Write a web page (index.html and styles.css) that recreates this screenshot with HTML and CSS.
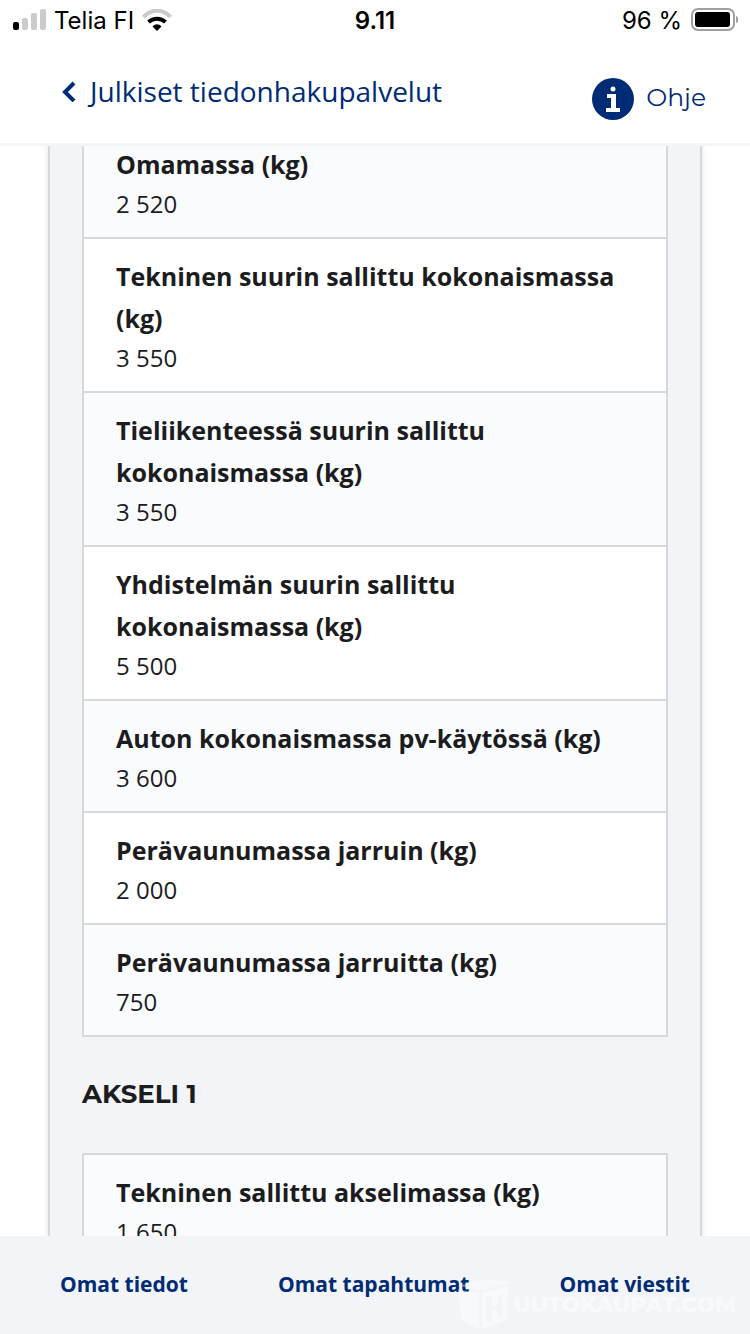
FILE: index.html
```html
<!DOCTYPE html>
<html lang="fi">
<head>
<meta charset="utf-8">
<meta name="viewport" content="width=device-width, initial-scale=1">
<title>Julkiset tiedonhakupalvelut</title>
<link rel="stylesheet" href="styles.css">
</head>
<body>
<div class="status">
  <div class="carrier">
    <svg width="34" height="22" viewBox="0 0 34 22" aria-hidden="true">
      <rect x="1" y="13" width="6" height="8" rx="2" fill="#000"/>
      <rect x="10" y="9" width="6" height="12" rx="2" fill="#cbcbcb"/>
      <rect x="19" y="4" width="6" height="17" rx="2" fill="#cbcbcb"/>
      <rect x="28" y="0" width="6" height="21" rx="2" fill="#cbcbcb"/>
    </svg>
    <span>Telia FI</span>
    <svg width="30" height="22" viewBox="0 0 30 22" aria-hidden="true">
      <path d="M1.500 8C9-.5 21-.5 28.500 8" fill="none" stroke="#cbcbcb" stroke-width="4"/>
      <path d="M6.500 13C11.500 8.500 18.500 8.500 23.500 13" fill="none" stroke="#000" stroke-width="4"/>
      <path d="M10.500 17.500c3-3 6-3 9 0L15 22z" fill="#000"/>
    </svg>
  </div>
  <time class="clock">9.11</time>
  <div class="battery">
    <span>96 %</span>
    <svg width="48" height="24" viewBox="0 0 48 24" aria-hidden="true">
      <rect x="2" y="1" width="42" height="21" rx="6" fill="none" stroke="#a0a0a0" stroke-width="2"/>
      <rect x="5" y="4" width="35" height="15" rx="3" fill="#000"/>
      <path d="M46 8c3 1 3 6 0 7z" fill="#a0a0a0"/>
    </svg>
  </div>
</div>
<header class="header">
  <a class="back" href="#">
    <svg width="14" height="22" viewBox="0 0 14 22" aria-hidden="true"><path d="M12 3 3 12l9 9" fill="none" stroke="currentColor" stroke-width="4"/></svg>
    <span>Julkiset tiedonhakupalvelut</span>
  </a>
  <a class="help" href="#">
    <svg width="42" height="42" viewBox="0 0 42 42" aria-hidden="true">
      <circle cx="21" cy="21" r="21" fill="currentColor"/>
      <circle cx="21" cy="11" r="2.500" fill="#fff"/>
      <path d="M15 16h9v14h4v4H14v-4h5v-10h-4z" fill="#fff"/>
    </svg>
    <span>Ohje</span>
  </a>
</header>
<main class="content">
  <div class="panel">
    <dl class="list list-continued">
      <div class="row"><dt>Omamassa (kg)</dt><dd>2 520</dd></div>
      <div class="row"><dt>Tekninen suurin sallittu kokonaismassa (kg)</dt><dd>3 550</dd></div>
      <div class="row"><dt>Tieliikenteessä suurin sallittu kokonaismassa (kg)</dt><dd>3 550</dd></div>
      <div class="row"><dt>Yhdistelmän suurin sallittu kokonaismassa (kg)</dt><dd>5 500</dd></div>
      <div class="row"><dt>Auton kokonaismassa pv-käytössä (kg)</dt><dd>3 600</dd></div>
      <div class="row"><dt>Perävaunumassa jarruin (kg)</dt><dd>2 000</dd></div>
      <div class="row"><dt>Perävaunumassa jarruitta (kg)</dt><dd>750</dd></div>
    </dl>
    <h2 class="title">AKSELI 1</h2>
    <dl class="list">
      <div class="row"><dt>Tekninen sallittu akselimassa (kg)</dt><dd>1 650</dd></div>
    </dl>
  </div>
</main>
<footer class="footer">
  <nav class="tabs">
    <a href="#">Omat tiedot</a>
    <a href="#">Omat tapahtumat</a>
    <a href="#">Omat viestit</a>
  </nav>
  <div class="watermark">
    <svg width="52" height="50" viewBox="0 0 54 52" aria-hidden="true">
      <path d="M0 7 28 0l26 3-30 9z" fill="#fff" opacity=".7"/>
      <path d="M0 11l22 4v37L3 42z" fill="#fff"/>
      <path fill-rule="evenodd" d="M25 15 52 7l-2 36-25 9zM29 20v25l6-2v-9l6-2v9l5-2V16l-5 2v8l-6 2V18z" fill="#fff"/>
    </svg>
    <span>UUTOKAUPAT.COM</span>
  </div>
</footer>
</body>
</html>
```
FILE: styles.css
```css
* {
  box-sizing: border-box;
}

body {
  display: flex;
  flex-direction: column;
  height: 100vh;
  margin: 0;
  background: #fff;
  color: #1c1c1e;
  font-family: "Open Sans", sans-serif;
  font-size: 24px;
}

a {
  color: #002b75;
  text-decoration: none;
}

.status {
  display: grid;
  grid-template-columns: 1fr auto 1fr;
  align-items: center;
  height: 40px;
  padding: 0 12px;
  color: #000;
  font-family: Inter, sans-serif;
  font-size: 24px;
  flex: none;
}

.carrier,
.battery {
  display: flex;
  align-items: center;
  gap: 8px;
}

.battery {
  justify-content: flex-end;
}

.clock {
  font-weight: 600;
}

.header {
  position: relative;
  display: flex;
  flex: none;
  align-items: center;
  justify-content: space-between;
  height: 103px;
  padding: 0 44px 0 62px;
  background: #fff;
  box-shadow: 0 3px #f5f5f6;
}

.back {
  display: flex;
  align-items: center;
  gap: 14px;
  padding-bottom: 2px;
  font-size: 28px;
}

.help {
  display: flex;
  align-items: center;
  gap: 12px;
  padding-top: 14px;
  font-family: Montserrat, Inter, sans-serif;
  font-size: 25px;
}

.help span {
  padding-bottom: 4px;
}

.content {
  flex: 1;
  min-height: 0;
  overflow: hidden;
  padding: 0 48px;
}

.panel {
  min-height: 100%;
  padding: 0 32px;
  background: #f2f4f8;
  border: solid #d6d8dc;
  border-width: 0 2px;
  box-shadow: 0 0 6px #e4e4e8;
}

.list {
  margin: 0;
  border: 2px solid #d6d8dc;
}

.list-continued {
  border-top: 0;
}

.row {
  padding: 16px 32px 14px;
  background: #fff;
}

.row:nth-child(odd) {
  background: #f9fbfd;
}

.row + .row {
  border-top: 2px solid #d6d8dc;
}

.list-continued .row:first-child {
  padding-top: 0;
}

dt {
  font-size: 25px;
  font-weight: 700;
  line-height: 42px;
}

dd {
  margin: 0;
  line-height: 38px;
}

.title {
  margin: 35px 0 37px;
  font-family: Montserrat, Inter, sans-serif;
  font-size: 26px;
  font-weight: 700;
  line-height: 44px;
}

.footer {
  position: relative;
  flex: none;
  height: 98px;
  background: #f2f4f8;
}

.tabs {
  display: flex;
  align-items: center;
  justify-content: space-between;
  height: 96px;
  padding: 0 60px;
  font-size: 21px;
  font-weight: 700;
}

.watermark {
  position: absolute;
  right: 14px;
  bottom: 5px;
  display: flex;
  align-items: center;
  gap: 4px;
  color: #fff;
  font-family: Montserrat, Inter, sans-serif;
  font-size: 22px;
  font-weight: 800;
  opacity: 0.5;
  pointer-events: none;
}
```
